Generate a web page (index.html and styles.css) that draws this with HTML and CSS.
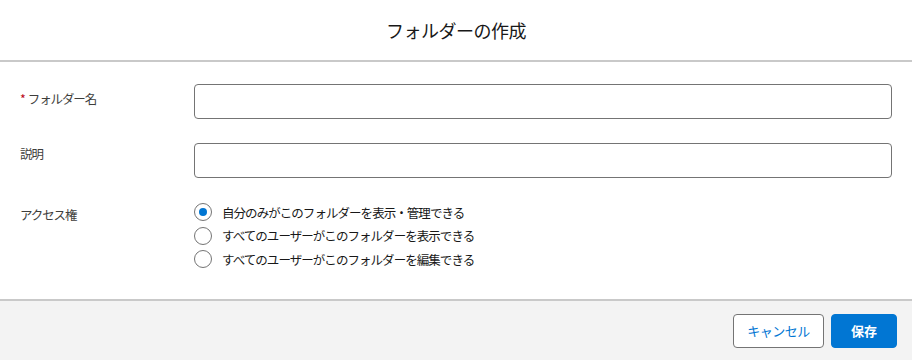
FILE: index.html
```html
<!DOCTYPE html>
<html lang="ja">
<head>
<meta charset="utf-8">
<link rel="stylesheet" href="styles.css">
</head>
<body>
<div class="modal">
  <header class="head"><h1 class="title">フォルダーの作成</h1></header>
  <main class="body">
    <div class="row">
      <label class="label label-name"><span class="req">*</span>フォルダー名</label>
      <div class="field"><input class="input" type="text"></div>
    </div>
    <div class="row">
      <label class="label label-desc">説明</label>
      <div class="field"><input class="input input-desc" type="text"></div>
    </div>
    <div class="row row-access">
      <span class="label label-access">アクセス権</span>
      <div class="radios">
        <label class="radio"><span class="dot on"></span><span>自分のみがこのフォルダーを表示・管理できる</span></label>
        <label class="radio"><span class="dot"></span><span>すべてのユーザーがこのフォルダーを表示できる</span></label>
        <label class="radio"><span class="dot"></span><span>すべてのユーザーがこのフォルダーを編集できる</span></label>
      </div>
    </div>
  </main>
  <footer class="foot">
    <button class="btn btn-neutral">キャンセル</button>
    <button class="btn btn-brand">保存</button>
  </footer>
</div>
</body>
</html>
```
FILE: styles.css
```css
html, body { margin: 0; padding: 0; background: #fff; }
body { font-family: "Noto Sans CJK JP", "Noto Sans", sans-serif; color: #181818; width: 912px; height: 360px; overflow: hidden; }
.modal { display: flex; flex-direction: column; height: 360px; }
.head { height: 60px; border-bottom: 2px solid #c9c9c9; display: flex; align-items: center; justify-content: center; }
.title { margin: 0; font-size: 18px; font-weight: 400; color: #181818; letter-spacing: -0.5px; }
.body { flex: 1; padding: 22px 20px 0 20px; display: flex; flex-direction: column; }
.row { display: flex; align-items: flex-start; margin-bottom: 24px; }
.label { width: 174px; font-size: 12.5px; line-height: 18px; color: #3e3e3c; flex: none; letter-spacing: -1.1px; }
.label-name { padding-top: 6px; }
.label-desc { padding-top: 2px; }
.label-access { padding-top: 5px; }
.req { color: #ba0517; margin-right: 3px; }
.field { flex: 1; }
.input { display: block; width: 100%; box-sizing: border-box; height: 35px; border: 1px solid #747474; border-radius: 4px; background: #fff; margin: 0; padding: 0 12px; font: inherit; }
.input-desc { height: 35px; }
.row-access { margin-top: -1px; }
.radios { display: flex; flex-direction: column; gap: 5px; padding-top: 2px; }
.radio { display: flex; align-items: center; font-size: 12.5px; color: #181818; height: 18.5px; letter-spacing: -0.95px; }
.dot { border: 1px solid #747474; border-radius: 50%; box-sizing: border-box; width: 18px; height: 18px; margin-right: 10px; flex: none; position: relative; background: #fff; }
.dot.on::after { content: ""; position: absolute; left: 4px; top: 4px; width: 8px; height: 8px; border-radius: 50%; background: #0176d3; }
.foot { height: 59px; border-top: 2px solid #c9c9c9; background: #f3f3f3; display: flex; justify-content: flex-end; align-items: center; padding: 0 15px 0 0; gap: 7px; }
.btn { height: 34px; border-radius: 4px; font-family: inherit; font-size: 13px; padding: 0; margin: 0; cursor: pointer; white-space: nowrap; }
.btn-neutral { background: #fff; border: 1px solid #747474; color: #0176d3; width: 91px; letter-spacing: -0.5px; }
.btn-brand { background: #0176d3; border: 1px solid #0176d3; color: #fff; width: 66px; font-weight: 700; }
```
